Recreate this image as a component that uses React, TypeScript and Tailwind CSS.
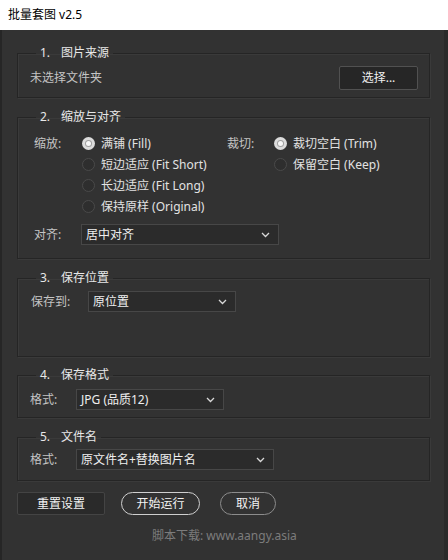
import React from "react";

const font = { fontFamily: '"Noto Sans", "Noto Sans CJK SC", sans-serif' };

function Group({ no, title, className, children }: { no: string; title: string; className?: string; children: React.ReactNode }) {
  return (
    <fieldset
      className={
        "border border-[#252525] shadow-[inset_1px_1px_0_#3a3a3a,1px_1px_0_#3a3a3a] " + (className ?? "")
      }
    >
      <legend className="ml-[18px] px-[4px] text-[12px] leading-[18px] text-[#e8e8e8]">
        {no}
        <span className="ml-[11px]">{title}</span>
      </legend>
      {children}
    </fieldset>
  );
}

function Chevron() {
  return (
    <svg width="9" height="6" viewBox="0 0 9 6" fill="none" className="shrink-0">
      <path d="M1 1l3.5 3.5L8 1" stroke="#d8d8d8" strokeWidth="1.3" />
    </svg>
  );
}

function Select({ value, className }: { value: string; className?: string }) {
  return (
    <div
      className={
        "flex h-[21px] items-center justify-between border border-[#474747] bg-[#2b2b2b] pl-[4px] pr-[8px] text-[12px] text-[#efefef] " +
        (className ?? "")
      }
    >
      <span>{value}</span>
      <Chevron />
    </div>
  );
}

function Radio({ label, checked }: { label: string; checked?: boolean }) {
  return (
    <div className="flex h-[21px] items-center">
      {checked ? (
        <span className="flex h-[13px] w-[13px] items-center justify-center rounded-full bg-[#dcdcdc]">
          <span className="h-[5px] w-[5px] rounded-full bg-[#f7f7f7] shadow-[0_0_0_1px_#a0a0a0]" />
        </span>
      ) : (
        <span className="h-[13px] w-[13px] rounded-full border border-[#4a4a4a] bg-[#2e2e2e]" />
      )}
      <span className="ml-[6px] text-[12px] text-[#e2e2e2]">{label}</span>
    </div>
  );
}

export default function App() {
  return (
    <div className="h-[560px] w-[448px] overflow-hidden bg-[#323232]" style={font}>
      {/* 标题栏 */}
      <div className="flex h-[30px] items-center bg-white pl-[8px] text-[12px] text-black">批量套图 v2.5</div>

      <div className="h-[530px] border-l-2 border-r-[4px] border-l-[#262626] border-r-[#2a2a2a] pl-[15px] pr-[14px] pt-[14px]">
        {/* 1 */}
        <Group no="1." title="图片来源">
          <div className="mt-[4px] flex items-center justify-between pb-[7px] pl-[12px] pr-[11px]">
            <span className="text-[12px] text-[#c4c4c4]">未选择文件夹</span>
            <button className="h-[24px] w-[79px] rounded-[2px] border border-[#515151] bg-[#262626] text-[12px] text-[#efefef]">
              选择...
            </button>
          </div>
        </Group>

        {/* 2 */}
        <Group no="2." title="缩放与对齐" className="mt-[10px]">
          <div className="pb-[13px] pl-[16px] pt-[7px]">
            <div className="flex">
              <div className="flex w-[193px]">
                <span className="w-[48px] pt-[2px] text-[12px] leading-[18px] text-[#c4c4c4]">缩放:</span>
                <div className="flex flex-col">
                  <Radio label="满铺 (Fill)" checked />
                  <Radio label="短边适应 (Fit Short)" />
                  <Radio label="长边适应 (Fit Long)" />
                  <Radio label="保持原样 (Original)" />
                </div>
              </div>
              <div className="flex">
                <span className="w-[47px] pt-[2px] text-[12px] leading-[18px] text-[#c4c4c4]">裁切:</span>
                <div className="flex flex-col">
                  <Radio label="裁切空白 (Trim)" checked />
                  <Radio label="保留空白 (Keep)" />
                </div>
              </div>
            </div>
            <div className="mt-[7px] flex items-center">
              <span className="w-[47px] text-[12px] text-[#c4c4c4]">对齐:</span>
              <Select value="居中对齐" className="w-[198px]" />
            </div>
          </div>
        </Group>

        {/* 3 */}
        <Group no="3." title="保存位置" className="mt-[10px]">
          <div className="mt-[4px] flex items-center pb-[44px] pl-[13px]">
            <span className="w-[57px] text-[12px] text-[#c4c4c4]">保存到:</span>
            <Select value="原位置" className="w-[148px]" />
          </div>
        </Group>

        {/* 4 */}
        <Group no="4." title="保存格式" className="mt-[9px]">
          <div className="mt-[5px] flex items-center pb-[7px] pl-[12px]">
            <span className="w-[46px] text-[12px] text-[#c4c4c4]">格式:</span>
            <Select value="JPG (品质12)" className="w-[148px]" />
          </div>
        </Group>

        {/* 5 */}
        <Group no="5." title="文件名" className="mt-[10px]">
          <div className="mt-[3px] flex items-center pb-[10px] pl-[12px]">
            <span className="w-[46px] text-[12px] text-[#c4c4c4]">格式:</span>
            <Select value="原文件名+替换图片名" className="w-[198px]" />
          </div>
        </Group>

        {/* 按钮 */}
        <div className="mt-[11px] flex items-center">
          <button className="h-[23px] w-[88px] rounded-[2px] border border-[#444] bg-[#2a2a2a] text-[12px] text-[#f2f2f2]">
            重置设置
          </button>
          <button className="ml-[16px] h-[23px] w-[79px] rounded-full border border-[#cfcfcf] text-[12px] text-[#f2f2f2]">
            开始运行
          </button>
          <button className="ml-[20px] h-[23px] w-[56px] rounded-full border border-[#8c8c8c] text-[12px] text-[#f2f2f2]">
            取消
          </button>
        </div>

        <div className="mt-[12px] pl-[135px] text-[12px] text-[#7c7c7c]">脚本下载: www.aangy.asia</div>
      </div>
    </div>
  );
}
